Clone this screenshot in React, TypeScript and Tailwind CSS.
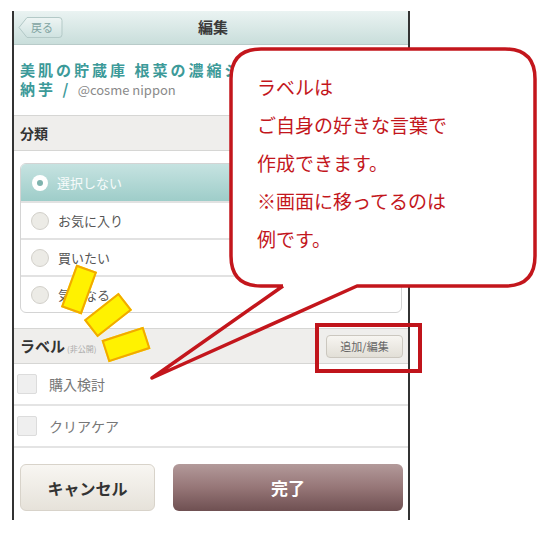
import React from "react";

const FONT = { fontFamily: '"Noto Sans CJK JP", "Noto Sans", sans-serif' };

const RADIOS = [
  { label: "選択しない", selected: true },
  { label: "お気に入り", selected: false },
  { label: "買いたい", selected: false },
  { label: "気になる", selected: false },
];

const LABELS = ["購入検討", "クリアケア"];

function BackButton() {
  return (
    <div className="relative h-[23px] w-[45px]">
      <svg className="absolute inset-0" width="45" height="23" viewBox="0 0 45 23">
        <defs>
          <linearGradient id="bk" x1="0" y1="0" x2="0" y2="1">
            <stop offset="0" stopColor="#eef5f4" />
            <stop offset="1" stopColor="#cfe2e0" />
          </linearGradient>
        </defs>
        <path
          d="M1 11.5 L9 1.5 H41 Q44 1.5 44 4.5 V18.5 Q44 21.5 41 21.5 H9 Z"
          fill="url(#bk)"
          stroke="#b3c9c7"
        />
      </svg>
      <span className="relative flex h-full items-center pl-[13px] text-[11px] text-[#7fa3a1]">
        戻る
      </span>
    </div>
  );
}

function RadioRow({ label, selected }: { label: string; selected: boolean }) {
  return (
    <div
      className={
        selected
          ? "flex h-[37px] items-center gap-[9px] bg-gradient-to-b from-[#c6e3e1] to-[#9ecdc9] pl-[11px]"
          : "flex h-[37px] items-center gap-[9px] border-t-2 border-[#e2e2e2] pl-[10px]"
      }
    >
      {selected ? (
        <div className="flex h-[16px] w-[16px] items-center justify-center rounded-full bg-white">
          <div className="h-[6px] w-[6px] rounded-full bg-[#7fb3ae]" />
        </div>
      ) : (
        <div className="h-[18px] w-[18px] rounded-full border border-[#d2d0ca] bg-[#ecebe6]" />
      )}
      <span className={selected ? "text-[13px] text-white/90" : "text-[13px] text-[#555]"}>
        {label}
      </span>
    </div>
  );
}

function CheckRow({ label }: { label: string }) {
  return (
    <div className="flex h-[42px] items-center gap-[12px] border-b-2 border-[#e4e4e4] pl-[3px]">
      <div className="h-[20px] w-[20px] rounded-[2px] border border-[#dcdcdc] bg-[#efefef]" />
      <span className="text-[14px] text-[#777]">{label}</span>
    </div>
  );
}

export default function App() {
  return (
    <div className="relative h-[536px] w-[550px] overflow-hidden bg-white" style={FONT}>
      {/* phone frame */}
      <div className="ml-[12px] mt-[11px] flex h-[509px] w-[398px] flex-col border-x-2 border-[#333]">
        <div className="grid h-[34px] grid-cols-[1fr_auto_1fr] items-center border-b border-[#b8cbc9] bg-gradient-to-b from-[#eaf3f2] to-[#c9dedb] pl-[4px]">
          <BackButton />
          <div className="text-[15px] font-bold text-[#3a3a3a]">編集</div>
          <div />
        </div>

        <div className="px-[6px] py-[16px]">
          <div className="whitespace-nowrap text-[15px] font-bold leading-[18px] tracking-[3px] text-[#3c9a99]">
            美肌の貯蔵庫 根菜の濃縮ジュレ
          </div>
          <div className="whitespace-nowrap leading-[18px]">
            <span className="text-[15px] font-bold tracking-[3px] text-[#3c9a99]">納芋 / </span>
            <span className="text-[13px] text-[#8a8a8a]">@cosme nippon</span>
          </div>
        </div>

        <div className="flex h-[36px] items-center border-y border-[#d6d6d4] bg-[#efeeec] pl-[6px] text-[14px] font-bold text-[#333]">
          分類
        </div>

        <div className="mx-[6px] mt-[12px] overflow-hidden rounded-[6px] border border-[#d4d4d4]">
          {RADIOS.map((r) => (
            <RadioRow key={r.label} label={r.label} selected={r.selected} />
          ))}
        </div>

        <div className="mt-[15px] flex h-[36px] items-center justify-between border-y border-[#d6d6d4] bg-[#efeeec] pl-[6px] pr-[5px]">
          <div className="flex items-baseline gap-[2px]">
            <span className="text-[15px] font-bold text-[#333]">ラベル</span>
            <span className="text-[8px] text-[#aaa]">(非公開)</span>
          </div>
          <div className="flex h-[23px] w-[77px] items-center justify-center rounded-[4px] border border-[#cbc7bf] bg-gradient-to-b from-[#f7f5f1] to-[#e2dfd7] text-[11px] text-[#666]">
            追加/編集
          </div>
        </div>

        <div>
          {LABELS.map((l) => (
            <CheckRow key={l} label={l} />
          ))}
        </div>

        <div className="mt-[16px] flex gap-[18px] pl-[6px] pr-[5px]">
          <div className="flex h-[47px] w-[135px] items-center justify-center rounded-[6px] border border-[#d8d3ca] bg-gradient-to-b from-[#f8f6f2] to-[#e6e2da] text-[16px] font-bold text-[#333]">
            キャンセル
          </div>
          <div className="flex h-[47px] flex-1 items-center justify-center rounded-[6px] bg-gradient-to-b from-[#b39a9a] via-[#967677] to-[#6f5052] text-[17px] font-bold text-white">
            完了
          </div>
        </div>
      </div>

      {/* yellow marks */}
      <div className="absolute left-[68px] top-[267px] h-[45px] w-[22px] rotate-[20deg] border-2 border-[#f2a900] bg-[#fff200]" />
      <div className="absolute left-[86px] top-[304px] h-[22px] w-[44px] -rotate-[38deg] border-2 border-[#f2a900] bg-[#fff200]" />
      <div className="absolute left-[104px] top-[333px] h-[23px] w-[44px] -rotate-[18deg] border-2 border-[#f2a900] bg-[#fff200]" />

      {/* highlight around add button */}
      <div className="absolute left-[315px] top-[323px] h-[50px] w-[107px] border-4 border-[#c0141b]" />

      {/* callout */}
      <svg className="pointer-events-none absolute left-0 top-0" width="550" height="536" viewBox="0 0 550 536">
        <path d="M261 49 H505 Q535 49 535 79 V257 Q535 287 505 287 H261 Q231 287 231 257 V79 Q231 49 261 49 Z" fill="#fff" />
        <path
          d="M283 286 H261 Q231 286 231 256 V79 Q231 49 261 49 H505 Q535 49 535 79 V256 Q535 286 505 286 H357 L152 378 L283 286"
          fill="none"
          stroke="#c3161c"
          strokeWidth="3.5"
          strokeLinejoin="round"
        />
      </svg>
      <div className="absolute left-[257px] top-[68px] text-[19px] leading-[38px] text-[#c3161c]">
        <div>ラベルは</div>
        <div>ご自身の好きな言葉で</div>
        <div>作成できます。</div>
        <div>※画面に移ってるのは</div>
        <div>例です。</div>
      </div>
    </div>
  );
}
